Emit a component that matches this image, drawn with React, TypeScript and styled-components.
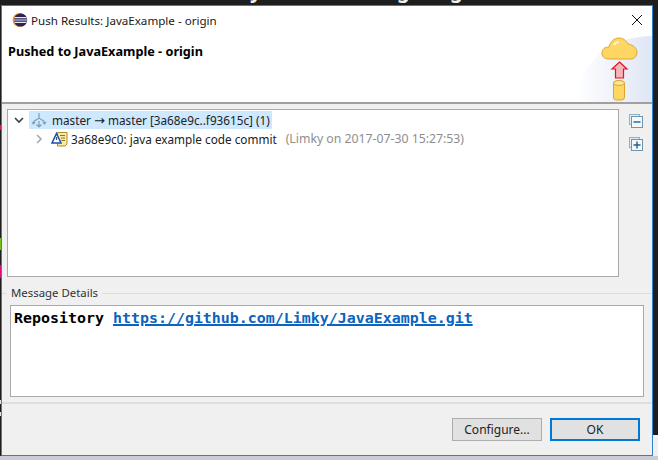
import React from 'react';
import styled, { createGlobalStyle } from 'styled-components';

const Global = createGlobalStyle`
  html, body {
    margin: 0;
    padding: 0;
    background: #1e1e1e;
  }
`;

const Desktop = styled.div`
  position: relative;
  width: 658px;
  height: 460px;
  box-sizing: border-box;
  padding: 5px 5px 4px 1px;
  background:
    linear-gradient(to bottom, #1e1e1e 0, #1e1e1e 435px, #eef0f4 435px) right top / 6px 456px no-repeat,
    linear-gradient(
        to bottom,
        #1e1e1e 0 125px,
        #d6127c 125px 130px,
        #1e1e1e 130px 238px,
        #6fc21e 238px 250px,
        #1e1e1e 250px 265px,
        #d6127c 265px 278px,
        #1e1e1e 278px 400px,
        #dfe3ea 400px 404px,
        #1e1e1e 404px 412px,
        #dfe3ea 412px 416px,
        #1e1e1e 416px
      )
      left top / 1px 456px no-repeat,
    linear-gradient(to bottom, #1e1e1e 0, #1e1e1e 456px, #c9cbd6 456px);
  overflow: hidden;
  font-family: 'Noto Sans', 'Liberation Sans', sans-serif;
`;

// descenders of the page heading behind the dialog, only their tips show
const BackdropGlyph = styled.span<{ $left: number }>`
  position: absolute;
  top: -21px;
  left: ${(p) => p.$left}px;
  font-size: 20px;
  line-height: 24px;
  font-weight: 700;
  color: #f2f2f2;
`;

const Window = styled.div`
  position: relative;
  width: 100%;
  height: 100%;
  box-sizing: border-box;
  border: 1px solid #2b83cc;
  background: #f0f0f0;
  display: flex;
  flex-direction: column;
`;

const TitleBar = styled.div`
  height: 30px;
  flex: none;
  display: flex;
  align-items: center;
  gap: 3px;
  padding: 0 9px 2px 10px;
  box-sizing: border-box;
  background: #fff;
`;

const TitleText = styled.span`
  flex: 1;
  font-size: 11.6px;
  color: #1a1a1a;
`;

const Header = styled.div`
  height: 68px;
  flex: none;
  box-sizing: border-box;
  position: relative;
  display: flex;
  justify-content: space-between;
  padding: 3px 14px 0 6px;
  background: #fff;
  border-bottom: 2px solid #a0a0a0;
  overflow: hidden;
`;

const HeaderTitle = styled.h1`
  margin: 0;
  font-size: 12.7px;
  line-height: 24px;
  font-weight: 700;
  color: #000;
`;

const Wash = styled.div`
  position: absolute;
  right: 0;
  top: 0;
  width: 76px;
  height: 66px;
  background: linear-gradient(to right, #ffffff 0, #dfe6f5 100%);
  clip-path: ellipse(76px 66px at 100% 100%);
`;

const Banner = styled.svg`
  position: relative;
  width: 38px;
  height: 66px;
  margin-top: -3px;
`;

const TreeRow = styled.div`
  display: flex;
  gap: 10px;
  padding: 5px 0 0 5px;
  flex: none;
`;

const TreeBox = styled.div`
  width: 612px;
  height: 168px;
  box-sizing: border-box;
  border: 1px solid #a9a9a9;
  background: #fff;
  padding: 0 0 0 5px;
  font-size: 11.75px;
  color: #222;
`;

const Side = styled.div`
  display: flex;
  flex-direction: column;
  gap: 9px;
  padding-top: 5px;
`;

const Node = styled.div<{ $indent: number }>`
  height: 19px;
  display: flex;
  align-items: center;
  gap: 3px;
  padding-left: ${(p) => p.$indent}px;
  white-space: nowrap;
`;

const Selected = styled.span`
  display: inline-flex;
  align-items: center;
  gap: 5px;
  height: 18px;
  margin-left: 1px;
  padding: 0 2px;
  background: #cde8ff;
`;

const Arrow = styled.span`
  font-family: 'DejaVu Sans', sans-serif;
  font-size: 13px;
`;

const Muted = styled.span`
  font-size: 12.25px;
  color: #8e8e8e;
  margin-left: 6px;
`;

const DetailsGroup = styled.div`
  display: flex;
  flex-direction: column;
  padding: 6px 8px 0 8px;
  flex: none;
`;

const Legend = styled.div`
  display: flex;
  align-items: center;
  gap: 4px;
  height: 20px;
  margin-left: -8px;
  font-size: 11.4px;
  color: #333;
  &::before {
    content: '';
    width: 5px;
    height: 1px;
    background: #dcdcdc;
  }
  &::after {
    content: '';
    flex: 1;
    height: 1px;
    margin-right: -8px;
    background: #dcdcdc;
  }
`;

const LegendText = styled.span`
  margin-bottom: 2px;
`;

const Details = styled.div`
  height: 92px;
  box-sizing: border-box;
  margin-top: 2px;
  border: 1px solid #a9a9a9;
  background: #fff;
  padding: 2px 3px;
  font-family: 'DejaVu Sans Mono', 'Liberation Mono', monospace;
  font-size: 14.95px;
  line-height: 20px;
  font-weight: 700;
  color: #000;
`;

const RepoLink = styled.a`
  color: #0a64c0;
  text-decoration: underline;
  text-decoration-thickness: 2px;
`;

const Footer = styled.div`
  flex: 1;
  margin-top: 5px;
  border-top: 2px solid #dedede;
  display: flex;
  justify-content: flex-end;
  gap: 8px;
  padding: 14px 12px 0 0;
`;

const Button = styled.button<{ $primary?: boolean }>`
  width: 90px;
  height: 23px;
  box-sizing: border-box;
  border: ${(p) => (p.$primary ? '2px solid #0078d7' : '1px solid #adadad')};
  background: #e1e1e1;
  font-family: inherit;
  font-size: 12px;
  color: #222;
  padding: 0;
`;

const CommitSvg = styled.svg`
  margin-left: 3px;
`;

const ChevronDown = () => (
  <svg width="12" height="12" viewBox="0 0 12 12" fill="none">
    <path d="M2 4l4 4 4-4" stroke="#404040" strokeWidth="1.6" />
  </svg>
);

const ChevronRight = () => (
  <svg width="12" height="12" viewBox="0 0 12 12" fill="none">
    <path d="M4 2l4 4-4 4" stroke="#a8a8a8" strokeWidth="1.6" />
  </svg>
);

const EclipseIcon = () => (
  <svg width="16" height="16" viewBox="0 0 16 16">
    <circle cx="7.6" cy="8" r="7" fill="#f7941e" />
    <circle cx="8.6" cy="8" r="6.6" fill="#2c2255" />
    <path d="M2.5 5.6h12M2 8h13M2.5 10.4h12" stroke="#e8e8f2" strokeWidth="1.1" />
  </svg>
);

const CloseIcon = () => (
  <svg width="12" height="12" viewBox="0 0 12 12">
    <path d="M1 1l10 10M11 1L1 11" stroke="#111" strokeWidth="1" />
  </svg>
);

const PushIcon = () => (
  <svg width="16" height="16" viewBox="0 0 16 16" fill="none">
    <path
      d="M8 1v5M2.5 11C2.5 7.5 6 8.5 8 6c2 2.5 5.5 1.5 5.5 5M1 10l1.5 2L4 10M12 10l1.5 2 1.5-2M5.5 12.5L8 15l2.5-2.5M8 9v6"
      stroke="#7d9fb6"
      strokeWidth="1.2"
    />
  </svg>
);

const CommitIcon = () => (
  <CommitSvg width="17" height="16" viewBox="0 0 17 16">
    <path d="M6.5 1.5h9.5v11.5l-2 2H6.5z" fill="#fbeaa6" stroke="#a88c2a" strokeWidth="1" />
    <path d="M9 4.5h5M10 7h4M10.5 9.5h3.5" stroke="#8a7420" strokeWidth="1" />
    <path d="M5.5 2.5L10 12H1z" fill="#fff" stroke="#1f4fa8" strokeWidth="1.5" />
    <path d="M5.5 6v3" stroke="#1f4fa8" strokeWidth="1.2" />
  </CommitSvg>
);

const CollapseIcon = () => (
  <svg width="14" height="14" viewBox="0 0 14 14">
    <rect x="0.5" y="0.5" width="10" height="10" fill="#e6eef5" stroke="#8fb0c8" />
    <rect x="2.5" y="2.5" width="11" height="11" fill="#f4f8fb" stroke="#6f94ad" />
    <path d="M4.5 8h7" stroke="#1f5f94" strokeWidth="1.4" />
  </svg>
);

const ExpandIcon = () => (
  <svg width="14" height="14" viewBox="0 0 14 14">
    <rect x="0.5" y="0.5" width="10" height="10" fill="#e6eef5" stroke="#8fb0c8" />
    <rect x="2.5" y="2.5" width="11" height="11" fill="#f4f8fb" stroke="#6f94ad" />
    <path d="M4.5 8h7M8 4.5v7" stroke="#1f5f94" strokeWidth="1.4" />
  </svg>
);

const App = () => (
  <Desktop>
    <Global />
    <BackdropGlyph $left={250}>y</BackdropGlyph>
    <BackdropGlyph $left={397}>g</BackdropGlyph>
    <BackdropGlyph $left={450}>g</BackdropGlyph>
    <Window>
      <TitleBar>
        <EclipseIcon />
        <TitleText>Push Results: JavaExample - origin</TitleText>
        <CloseIcon />
      </TitleBar>
      <Header>
        <HeaderTitle>Pushed to JavaExample - origin</HeaderTitle>
        <Wash />
        <Banner viewBox="0 0 38 66">
          <path
            d="M9 23C4 23 2 20 2 17C2 13 5 11 9 11C10 6 14 2 19 2C23 2 26 4 28 8C33 9 37 12 37 16.5C37 20 34 23 31 23Z"
            fill="#fdd663"
            stroke="#e0a62a"
          />
          <path d="M14 9c1-2 3-3 5-3" stroke="#fff3c4" strokeWidth="2" fill="none" />
          <path
            d="M19.5 26l7.5 7h-3.5v9h-8v-9H12z"
            fill="#f6b3b8"
            stroke="#e3131f"
            strokeWidth="1.2"
          />
          <rect x="13.5" y="45" width="11" height="19" rx="3" fill="#fdd663" stroke="#dca52c" />
          <ellipse cx="19" cy="47" rx="5.5" ry="2.4" fill="#fbe69a" stroke="#dca52c" />
        </Banner>
      </Header>
      <TreeRow>
        <TreeBox>
          <Node $indent={0}>
            <ChevronDown />
            <Selected>
              <PushIcon />
              <span>
                master <Arrow>→</Arrow> master [3a68e9c..f93615c] (1)
              </span>
            </Selected>
          </Node>
          <Node $indent={20}>
            <ChevronRight />
            <CommitIcon />
            3a68e9c0: java example code commit
            <Muted>(Limky on 2017-07-30 15:27:53)</Muted>
          </Node>
        </TreeBox>
        <Side>
          <CollapseIcon />
          <ExpandIcon />
        </Side>
      </TreeRow>
      <DetailsGroup>
        <Legend>
          <LegendText>Message Details</LegendText>
        </Legend>
        <Details>
          Repository <RepoLink>https://github.com/Limky/JavaExample.git</RepoLink>
        </Details>
      </DetailsGroup>
      <Footer>
        <Button>Configure...</Button>
        <Button $primary>OK</Button>
      </Footer>
    </Window>
  </Desktop>
);

export default App;
